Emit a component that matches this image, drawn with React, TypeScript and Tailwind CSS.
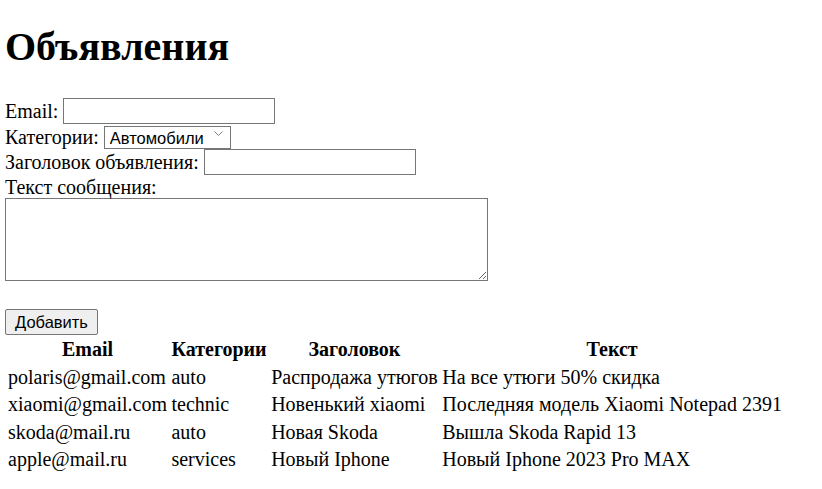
import React, { useState } from "react"

type Ad = {
  email: string
  category: string
  title: string
  text: string
}

const ads: Ad[] = [
  { email: "polaris@gmail.com", category: "auto", title: "Распродажа утюгов", text: "На все утюги 50% скидка" },
  { email: "xiaomi@gmail.com", category: "technic", title: "Новенький xiaomi", text: "Последняя модель Xiaomi Notepad 2391" },
  { email: "skoda@mail.ru", category: "auto", title: "Новая Skoda", text: "Вышла Skoda Rapid 13" },
  { email: "apple@mail.ru", category: "services", title: "Новый Iphone", text: "Новый Iphone 2023 Pro MAX" },
]

const inputCls = "h-[26px] w-[212px] border border-[#767676] bg-white px-[3px] font-['Liberation_Sans',sans-serif] text-[16px] outline-none"
const cellCls = "pl-[1px] pr-[1.5px] py-[1px] leading-[23.5px] whitespace-nowrap"

const App: React.FC = () => {
  const [category, setCategory] = useState("auto")

  return (
    <div className="min-h-[489px] bg-white px-[5px] font-['Liberation_Serif',serif] text-[20px] text-black">
      <h1 className="pt-[24px] pb-[28px] text-[40px] leading-[46px] font-bold">Объявления</h1>
      <form onSubmit={(e) => e.preventDefault()}>
        <div className="flex h-[26px] items-center gap-[5px]">
          <span>Email:</span>
          <input type="text" className={inputCls} />
        </div>
        <div className="mt-[1px] flex h-[23px] items-center gap-[5px]">
          <span>Категории:</span>
          <div className="relative">
            <select
              value={category}
              onChange={(e) => setCategory(e.target.value)}
              className="h-[23px] w-[127px] appearance-none border border-[#767676] bg-white pl-[5px] font-['Liberation_Sans',sans-serif] text-[16.5px] leading-[20px] outline-none"
            >
              <option value="auto">Автомобили</option>
              <option value="technic">Техника</option>
              <option value="services">Услуги</option>
            </select>
            <svg className="pointer-events-none absolute top-[9px] right-[8px]" width="9" height="5" viewBox="0 0 9 5" fill="none">
              <path d="M0.5 0.5l4 4 4-4" stroke="#808080" strokeWidth="1" />
            </svg>
          </div>
        </div>
        <div className="mt-[1px] flex h-[26px] items-center gap-[5px]">
          <span>Заголовок объявления:</span>
          <input type="text" className={inputCls} />
        </div>
        <div className="mt-[2px] h-[21px] leading-[21px]">Текст сообщения:</div>
        <textarea className="block h-[83px] w-[483px] resize border border-[#767676] bg-white outline-none" />
        <button
          type="submit"
          className="mt-[28px] block h-[26px] w-[93px] rounded-[2px] border border-[#767676] bg-[#efefef] font-['Liberation_Sans',sans-serif] text-[16.5px] leading-[20px]"
        >
          Добавить
        </button>
      </form>
      <table className="mt-[0px] border-separate border-spacing-[2px]">
        <thead>
          <tr>
            <th className={cellCls + " text-center font-bold"}>Email</th>
            <th className={cellCls + " text-center font-bold"}>Категории</th>
            <th className={cellCls + " text-center font-bold"}>Заголовок</th>
            <th className={cellCls + " text-center font-bold"}>Текст</th>
          </tr>
        </thead>
        <tbody>
          {ads.map((ad, i) => (
            <tr key={i}>
              <td className={cellCls}>{ad.email}</td>
              <td className={cellCls}>{ad.category}</td>
              <td className={cellCls}>{ad.title}</td>
              <td className={cellCls}>{ad.text}</td>
            </tr>
          ))}
        </tbody>
      </table>
    </div>
  )
}

export default App
